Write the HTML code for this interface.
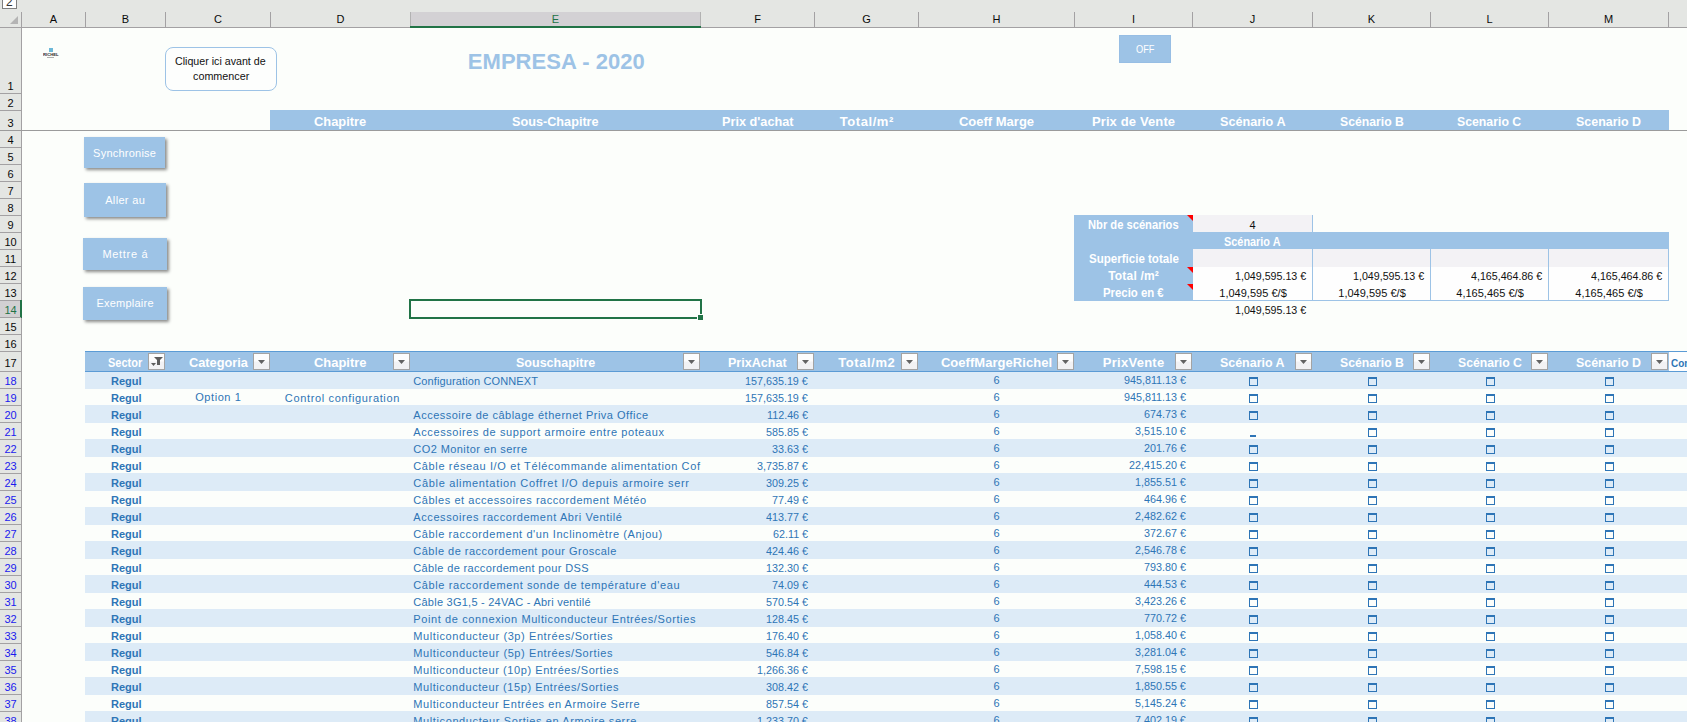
<!DOCTYPE html>
<html><head><meta charset="utf-8"><title>sheet</title>
<style>
html,body{margin:0;padding:0}
body{width:1687px;height:722px;overflow:hidden;background:#fcfefb;position:relative;font-family:"Liberation Sans",sans-serif}
#s{position:absolute;left:0;top:0;width:1687px;height:722px;overflow:hidden}
#s div,#s svg{position:absolute;box-sizing:content-box}
.t{white-space:pre;transform-origin:0 50%}
</style></head><body><div id="s">
<div style="left:0px;top:0px;width:1687px;height:28px;background:#e4e6e3;"></div>
<div style="left:0px;top:28px;width:22px;height:694px;background:#e4e6e3;"></div>
<div style="left:0px;top:27px;width:1687px;height:1px;background:#a3a1a3;"></div>
<div style="left:21px;top:12px;width:1px;height:710px;background:#a3a1a3;"></div>
<div style="left:2px;top:-8px;width:13px;height:15px;border:1px solid #7f7f7f;background:#fff"></div>
<div class="t" style="left:5.96px;top:-5.96px;font-size:12px;line-height:16px;color:#333;">2</div>
<svg style="left:10px;top:16px" width="9" height="9"><path d="M8 0 V8 H0 Z" fill="#b4b4b4"/></svg>
<div style="left:411px;top:12px;width:289px;height:14px;background:#d3d1d4;"></div>
<div style="left:85px;top:12px;width:1px;height:15px;background:#a3a1a3;"></div>
<div class="t" style="left:49.83px;top:12.39px;font-size:11px;line-height:14px;color:#0a0a0a;">A</div>
<div style="left:165px;top:12px;width:1px;height:15px;background:#a3a1a3;"></div>
<div class="t" style="left:121.83px;top:12.39px;font-size:11px;line-height:14px;color:#0a0a0a;">B</div>
<div style="left:270px;top:12px;width:1px;height:15px;background:#a3a1a3;"></div>
<div class="t" style="left:214.03px;top:12.39px;font-size:11px;line-height:14px;color:#0a0a0a;">C</div>
<div style="left:410px;top:12px;width:1px;height:15px;background:#b2b2b2;"></div>
<div class="t" style="left:336.53px;top:12.39px;font-size:11px;line-height:14px;color:#0a0a0a;">D</div>
<div style="left:700px;top:12px;width:1px;height:15px;background:#b2b2b2;"></div>
<div class="t" style="left:551.83px;top:12.39px;font-size:11px;line-height:14px;color:#217346;">E</div>
<div style="left:814px;top:12px;width:1px;height:15px;background:#a3a1a3;"></div>
<div class="t" style="left:754.14px;top:12.39px;font-size:11px;line-height:14px;color:#0a0a0a;">F</div>
<div style="left:918px;top:12px;width:1px;height:15px;background:#a3a1a3;"></div>
<div class="t" style="left:862.22px;top:12.39px;font-size:11px;line-height:14px;color:#0a0a0a;">G</div>
<div style="left:1074px;top:12px;width:1px;height:15px;background:#a3a1a3;"></div>
<div class="t" style="left:992.53px;top:12.39px;font-size:11px;line-height:14px;color:#0a0a0a;">H</div>
<div style="left:1192px;top:12px;width:1px;height:15px;background:#a3a1a3;"></div>
<div class="t" style="left:1131.97px;top:12.39px;font-size:11px;line-height:14px;color:#0a0a0a;">I</div>
<div style="left:1312px;top:12px;width:1px;height:15px;background:#a3a1a3;"></div>
<div class="t" style="left:1249.75px;top:12.39px;font-size:11px;line-height:14px;color:#0a0a0a;">J</div>
<div style="left:1430px;top:12px;width:1px;height:15px;background:#a3a1a3;"></div>
<div class="t" style="left:1367.83px;top:12.39px;font-size:11px;line-height:14px;color:#0a0a0a;">K</div>
<div style="left:1548px;top:12px;width:1px;height:15px;background:#a3a1a3;"></div>
<div class="t" style="left:1486.44px;top:12.39px;font-size:11px;line-height:14px;color:#0a0a0a;">L</div>
<div style="left:1668px;top:12px;width:1px;height:15px;background:#a3a1a3;"></div>
<div class="t" style="left:1603.92px;top:12.39px;font-size:11px;line-height:14px;color:#0a0a0a;">M</div>
<div style="left:410px;top:26px;width:291px;height:2px;background:#217346;"></div>
<div style="left:0px;top:93px;width:21px;height:1px;background:#a3a1a3;"></div>
<div class="t" style="left:7.44px;top:78.99px;font-size:11px;line-height:14px;color:#0a0a0a;">1</div>
<div style="left:0px;top:110px;width:21px;height:1px;background:#a3a1a3;"></div>
<div class="t" style="left:7.44px;top:95.99px;font-size:11px;line-height:14px;color:#0a0a0a;">2</div>
<div style="left:0px;top:130px;width:21px;height:1px;background:#a3a1a3;"></div>
<div class="t" style="left:7.44px;top:115.99px;font-size:11px;line-height:14px;color:#0a0a0a;">3</div>
<div style="left:0px;top:147px;width:21px;height:1px;background:#a3a1a3;"></div>
<div class="t" style="left:7.44px;top:132.99px;font-size:11px;line-height:14px;color:#0a0a0a;">4</div>
<div style="left:0px;top:164px;width:21px;height:1px;background:#a3a1a3;"></div>
<div class="t" style="left:7.44px;top:149.99px;font-size:11px;line-height:14px;color:#0a0a0a;">5</div>
<div style="left:0px;top:181px;width:21px;height:1px;background:#a3a1a3;"></div>
<div class="t" style="left:7.44px;top:166.99px;font-size:11px;line-height:14px;color:#0a0a0a;">6</div>
<div style="left:0px;top:198px;width:21px;height:1px;background:#a3a1a3;"></div>
<div class="t" style="left:7.44px;top:183.99px;font-size:11px;line-height:14px;color:#0a0a0a;">7</div>
<div style="left:0px;top:215px;width:21px;height:1px;background:#a3a1a3;"></div>
<div class="t" style="left:7.44px;top:200.99px;font-size:11px;line-height:14px;color:#0a0a0a;">8</div>
<div style="left:0px;top:232px;width:21px;height:1px;background:#a3a1a3;"></div>
<div class="t" style="left:7.44px;top:217.99px;font-size:11px;line-height:14px;color:#0a0a0a;">9</div>
<div style="left:0px;top:249px;width:21px;height:1px;background:#a3a1a3;"></div>
<div class="t" style="left:4.38px;top:234.99px;font-size:11px;line-height:14px;color:#0a0a0a;">10</div>
<div style="left:0px;top:266px;width:21px;height:1px;background:#a3a1a3;"></div>
<div class="t" style="left:4.79px;top:251.99px;font-size:11px;line-height:14px;color:#0a0a0a;">11</div>
<div style="left:0px;top:283px;width:21px;height:1px;background:#a3a1a3;"></div>
<div class="t" style="left:4.38px;top:268.99px;font-size:11px;line-height:14px;color:#0a0a0a;">12</div>
<div style="left:0px;top:300px;width:21px;height:1px;background:#a3a1a3;"></div>
<div class="t" style="left:4.38px;top:285.99px;font-size:11px;line-height:14px;color:#0a0a0a;">13</div>
<div style="left:0px;top:301px;width:21px;height:16px;background:#d2d0d2;"></div>
<div style="left:20px;top:300px;width:2px;height:18px;background:#217346;"></div>
<div style="left:0px;top:317px;width:21px;height:1px;background:#a3a1a3;"></div>
<div class="t" style="left:4.38px;top:302.99px;font-size:11px;line-height:14px;color:#217346;">14</div>
<div style="left:0px;top:334px;width:21px;height:1px;background:#a3a1a3;"></div>
<div class="t" style="left:4.38px;top:319.99px;font-size:11px;line-height:14px;color:#0a0a0a;">15</div>
<div style="left:0px;top:351px;width:21px;height:1px;background:#a3a1a3;"></div>
<div class="t" style="left:4.38px;top:336.99px;font-size:11px;line-height:14px;color:#0a0a0a;">16</div>
<div style="left:0px;top:371px;width:21px;height:1px;background:#a3a1a3;"></div>
<div class="t" style="left:4.38px;top:356.19px;font-size:11px;line-height:14px;color:#0a0a0a;">17</div>
<div style="left:0px;top:388px;width:21px;height:1px;background:#a3a1a3;"></div>
<div class="t" style="left:4.38px;top:373.99px;font-size:11px;line-height:14px;color:#1a1aee;">18</div>
<div style="left:0px;top:405px;width:21px;height:1px;background:#a3a1a3;"></div>
<div class="t" style="left:4.38px;top:390.99px;font-size:11px;line-height:14px;color:#1a1aee;">19</div>
<div style="left:0px;top:422px;width:21px;height:1px;background:#a3a1a3;"></div>
<div class="t" style="left:4.38px;top:407.99px;font-size:11px;line-height:14px;color:#1a1aee;">20</div>
<div style="left:0px;top:439px;width:21px;height:1px;background:#a3a1a3;"></div>
<div class="t" style="left:4.38px;top:424.99px;font-size:11px;line-height:14px;color:#1a1aee;">21</div>
<div style="left:0px;top:456px;width:21px;height:1px;background:#a3a1a3;"></div>
<div class="t" style="left:4.38px;top:441.99px;font-size:11px;line-height:14px;color:#1a1aee;">22</div>
<div style="left:0px;top:473px;width:21px;height:1px;background:#a3a1a3;"></div>
<div class="t" style="left:4.38px;top:458.99px;font-size:11px;line-height:14px;color:#1a1aee;">23</div>
<div style="left:0px;top:490px;width:21px;height:1px;background:#a3a1a3;"></div>
<div class="t" style="left:4.38px;top:475.99px;font-size:11px;line-height:14px;color:#1a1aee;">24</div>
<div style="left:0px;top:507px;width:21px;height:1px;background:#a3a1a3;"></div>
<div class="t" style="left:4.38px;top:492.99px;font-size:11px;line-height:14px;color:#1a1aee;">25</div>
<div style="left:0px;top:524px;width:21px;height:1px;background:#a3a1a3;"></div>
<div class="t" style="left:4.38px;top:509.99px;font-size:11px;line-height:14px;color:#1a1aee;">26</div>
<div style="left:0px;top:541px;width:21px;height:1px;background:#a3a1a3;"></div>
<div class="t" style="left:4.38px;top:526.99px;font-size:11px;line-height:14px;color:#1a1aee;">27</div>
<div style="left:0px;top:558px;width:21px;height:1px;background:#a3a1a3;"></div>
<div class="t" style="left:4.38px;top:543.99px;font-size:11px;line-height:14px;color:#1a1aee;">28</div>
<div style="left:0px;top:575px;width:21px;height:1px;background:#a3a1a3;"></div>
<div class="t" style="left:4.38px;top:560.99px;font-size:11px;line-height:14px;color:#1a1aee;">29</div>
<div style="left:0px;top:592px;width:21px;height:1px;background:#a3a1a3;"></div>
<div class="t" style="left:4.38px;top:577.99px;font-size:11px;line-height:14px;color:#1a1aee;">30</div>
<div style="left:0px;top:609px;width:21px;height:1px;background:#a3a1a3;"></div>
<div class="t" style="left:4.38px;top:594.99px;font-size:11px;line-height:14px;color:#1a1aee;">31</div>
<div style="left:0px;top:626px;width:21px;height:1px;background:#a3a1a3;"></div>
<div class="t" style="left:4.38px;top:611.99px;font-size:11px;line-height:14px;color:#1a1aee;">32</div>
<div style="left:0px;top:643px;width:21px;height:1px;background:#a3a1a3;"></div>
<div class="t" style="left:4.38px;top:628.99px;font-size:11px;line-height:14px;color:#1a1aee;">33</div>
<div style="left:0px;top:660px;width:21px;height:1px;background:#a3a1a3;"></div>
<div class="t" style="left:4.38px;top:645.99px;font-size:11px;line-height:14px;color:#1a1aee;">34</div>
<div style="left:0px;top:677px;width:21px;height:1px;background:#a3a1a3;"></div>
<div class="t" style="left:4.38px;top:662.99px;font-size:11px;line-height:14px;color:#1a1aee;">35</div>
<div style="left:0px;top:694px;width:21px;height:1px;background:#a3a1a3;"></div>
<div class="t" style="left:4.38px;top:679.99px;font-size:11px;line-height:14px;color:#1a1aee;">36</div>
<div style="left:0px;top:711px;width:21px;height:1px;background:#a3a1a3;"></div>
<div class="t" style="left:4.38px;top:696.99px;font-size:11px;line-height:14px;color:#1a1aee;">37</div>
<div style="left:0px;top:728px;width:21px;height:1px;background:#a3a1a3;"></div>
<div class="t" style="left:4.38px;top:713.99px;font-size:11px;line-height:14px;color:#1a1aee;">38</div>
<div style="left:0px;top:130px;width:1687px;height:1px;background:#9b9b9b;"></div>
<div style="left:49px;top:48px;width:4px;height:4px;background:#6cb8d8;"></div>
<div class="t" style="left:43.1px;top:52.6px;font-size:7px;line-height:8px;font-weight:bold;color:#2b2b2b;transform-origin:0 0;transform:scale(0.6,0.5)">RICHEL</div>
<div style="left:47px;top:57px;width:7px;height:1px;background:#b0b0b0;"></div>
<div style="left:165px;top:47px;width:110px;height:42px;border:1px solid #9dc3e6;border-radius:8px;background:#fdfefd"></div>
<div class="t" style="left:175.20px;top:54.19px;font-size:11px;line-height:14px;color:#111;transform:scaleX(0.9685);">Cliquer ici avant de</div>
<div class="t" style="left:192.65px;top:69.19px;font-size:11px;line-height:14px;color:#111;transform:scaleX(0.9798);">commencer</div>
<div class="t" style="left:467.80px;top:47.48px;font-size:22px;line-height:29px;color:#9dc3e6;font-weight:bold;letter-spacing:0.040px;">EMPRESA - 2020</div>
<div style="left:1119px;top:35px;width:50px;height:26px;border:1px solid #97bee4;background:#9dc3e6"></div>
<div class="t" style="left:1135.75px;top:42.09px;font-size:11px;line-height:14px;color:#fff;transform:scaleX(0.8411);">OFF</div>
<div style="left:270px;top:110px;width:1399px;height:20px;background:#9dc3e6;"></div>
<div class="t" style="left:314.40px;top:113.00px;font-size:13px;line-height:17px;color:#fff;font-weight:bold;transform:scaleX(0.9899);">Chapitre</div>
<div class="t" style="left:512.20px;top:113.00px;font-size:13px;line-height:17px;color:#fff;font-weight:bold;transform:scaleX(0.9747);">Sous-Chapitre</div>
<div class="t" style="left:721.75px;top:113.00px;font-size:13px;line-height:17px;color:#fff;font-weight:bold;transform:scaleX(0.9770);">Prix d&#x27;achat</div>
<div class="t" style="left:839.75px;top:113.00px;font-size:13px;line-height:17px;color:#fff;font-weight:bold;letter-spacing:0.559px;">Total/m²</div>
<div class="t" style="left:958.94px;top:113.00px;font-size:13px;line-height:17px;color:#fff;font-weight:bold;">Coeff Marge</div>
<div class="t" style="left:1091.90px;top:113.00px;font-size:13px;line-height:17px;color:#fff;font-weight:bold;letter-spacing:0.129px;">Prix de Vente</div>
<div class="t" style="left:1219.75px;top:113.00px;font-size:13px;line-height:17px;color:#fff;font-weight:bold;transform:scaleX(0.9713);">Scénario A</div>
<div class="t" style="left:1339.60px;top:113.00px;font-size:13px;line-height:17px;color:#fff;font-weight:bold;transform:scaleX(0.9394);">Scénario B</div>
<div class="t" style="left:1457.40px;top:113.00px;font-size:13px;line-height:17px;color:#fff;font-weight:bold;transform:scaleX(0.9453);">Scenario C</div>
<div class="t" style="left:1576.00px;top:113.00px;font-size:13px;line-height:17px;color:#fff;font-weight:bold;transform:scaleX(0.9571);">Scenario D</div>
<div style="left:84px;top:137px;width:81px;height:31px;background:#9dc3e6;box-shadow:2px 2px 3px rgba(0,0,0,.45)"></div>
<div class="t" style="left:93.10px;top:145.79px;font-size:11px;line-height:14px;color:#fff;letter-spacing:0.227px;">Synchronise</div>
<div style="left:84px;top:183px;width:82px;height:34px;background:#9dc3e6;box-shadow:2px 2px 3px rgba(0,0,0,.45)"></div>
<div class="t" style="left:105.20px;top:192.59px;font-size:11px;line-height:14px;color:#fff;letter-spacing:0.329px;">Aller au</div>
<div style="left:83px;top:238px;width:84px;height:32px;background:#9dc3e6;box-shadow:2px 2px 3px rgba(0,0,0,.45)"></div>
<div class="t" style="left:102.50px;top:246.89px;font-size:11px;line-height:14px;color:#fff;letter-spacing:0.664px;">Mettre á</div>
<div style="left:83px;top:287px;width:84px;height:33px;background:#9dc3e6;box-shadow:2px 2px 3px rgba(0,0,0,.45)"></div>
<div class="t" style="left:96.50px;top:296.09px;font-size:11px;line-height:14px;color:#fff;letter-spacing:0.220px;">Exemplaire</div>
<div style="left:1074px;top:215px;width:119px;height:86px;background:#9dc3e6;"></div>
<div style="left:1193px;top:215px;width:119px;height:17px;background:#f3f2f5;"></div>
<div style="left:1193px;top:232px;width:476px;height:17px;background:#9dc3e6;"></div>
<div style="left:1193px;top:249px;width:476px;height:18px;background:#f3f2f5;"></div>
<div style="left:1193px;top:267px;width:476px;height:33px;background:#fefefe;"></div>
<div style="left:1312px;top:249px;width:1px;height:52px;background:#9dc3e6;"></div>
<div style="left:1430px;top:249px;width:1px;height:52px;background:#9dc3e6;"></div>
<div style="left:1548px;top:249px;width:1px;height:52px;background:#9dc3e6;"></div>
<div style="left:1668px;top:249px;width:1px;height:52px;background:#9dc3e6;"></div>
<div style="left:1312px;top:215px;width:1px;height:17px;background:#9dc3e6;"></div>
<div style="left:1074px;top:300px;width:595px;height:1px;background:#9dc3e6;"></div>
<svg style="left:1187px;top:215px" width="6" height="6"><path d="M0 0 H6 V6 Z" fill="#f00"/></svg>
<svg style="left:1187px;top:267px" width="6" height="6"><path d="M0 0 H6 V6 Z" fill="#f00"/></svg>
<svg style="left:1187px;top:284px" width="6" height="6"><path d="M0 0 H6 V6 Z" fill="#f00"/></svg>
<div class="t" style="left:1088.20px;top:216.64px;font-size:12px;line-height:16px;color:#fff;font-weight:bold;transform:scaleX(0.9305);">Nbr de scénarios</div>
<div class="t" style="left:1088.60px;top:250.64px;font-size:12px;line-height:16px;color:#fff;font-weight:bold;transform:scaleX(0.9619);">Superficie totale</div>
<div class="t" style="left:1108.15px;top:267.64px;font-size:12px;line-height:16px;color:#fff;font-weight:bold;letter-spacing:0.199px;">Total /m²</div>
<div class="t" style="left:1103.15px;top:284.64px;font-size:12px;line-height:16px;color:#fff;font-weight:bold;transform:scaleX(0.9480);">Precio en €</div>
<div class="t" style="left:1249.44px;top:217.99px;font-size:11px;line-height:14px;color:#111;">4</div>
<div class="t" style="left:1224.25px;top:233.64px;font-size:12px;line-height:16px;color:#fff;font-weight:bold;transform:scaleX(0.9077);">Scénario A</div>
<div class="t" style="left:1234.80px;top:268.99px;font-size:11px;line-height:14px;color:#111;transform:scaleX(0.9700);">1,049,595.13 €</div>
<div class="t" style="left:1219.25px;top:285.99px;font-size:11px;line-height:14px;color:#111;letter-spacing:0.018px;">1,049,595 €/$</div>
<div class="t" style="left:1352.80px;top:268.99px;font-size:11px;line-height:14px;color:#111;transform:scaleX(0.9700);">1,049,595.13 €</div>
<div class="t" style="left:1338.25px;top:285.99px;font-size:11px;line-height:14px;color:#111;letter-spacing:0.018px;">1,049,595 €/$</div>
<div class="t" style="left:1470.80px;top:268.99px;font-size:11px;line-height:14px;color:#111;transform:scaleX(0.9700);">4,165,464.86 €</div>
<div class="t" style="left:1456.25px;top:285.99px;font-size:11px;line-height:14px;color:#111;letter-spacing:0.018px;">4,165,465 €/$</div>
<div class="t" style="left:1590.80px;top:268.99px;font-size:11px;line-height:14px;color:#111;transform:scaleX(0.9700);">4,165,464.86 €</div>
<div class="t" style="left:1575.25px;top:285.99px;font-size:11px;line-height:14px;color:#111;letter-spacing:0.018px;">4,165,465 €/$</div>
<div class="t" style="left:1234.80px;top:302.89px;font-size:11px;line-height:14px;color:#111;transform:scaleX(0.9700);">1,049,595.13 €</div>
<div style="left:409px;top:299px;width:289px;height:16px;border:2px solid #217346"></div>
<div style="left:697px;top:314px;width:7px;height:7px;background:#fcfefb;"></div>
<div style="left:698px;top:315px;width:5px;height:5px;background:#217346;"></div>
<div style="left:85px;top:351px;width:1602px;height:21px;background:#9dc3e6;"></div>
<div style="left:1669px;top:352px;width:18px;height:19px;background:#fefefe;"></div>
<div class="t" style="left:108.30px;top:353.80px;font-size:13px;line-height:17px;color:#fff;font-weight:bold;transform:scaleX(0.8452);">Sector</div>
<div style="left:148px;top:353px;width:15px;height:15px;border:1px solid #a3a3a3;background:linear-gradient(#fdfdfd 0,#fdfdfd 46%,#f2f2f4 54%,#f2f2f4 100%)"></div>
<svg style="left:148px;top:353px" width="17" height="17"><path d="M6 4 H15 L12 7 V12 H9 V7 Z" fill="#5c5c5c"/><path d="M3 10 H8 L5.5 13 Z" fill="#5c5c5c"/></svg>
<div class="t" style="left:188.60px;top:353.80px;font-size:13px;line-height:17px;color:#fff;font-weight:bold;transform:scaleX(0.9806);">Categoria</div>
<div style="left:253px;top:353px;width:15px;height:15px;border:1px solid #a3a3a3;background:linear-gradient(#fdfdfd 0,#fdfdfd 46%,#f2f2f4 54%,#f2f2f4 100%)"></div>
<svg style="left:253px;top:353px" width="17" height="17"><path d="M5 7 H12 L8.5 11 Z" fill="#636363"/></svg>
<div class="t" style="left:314.30px;top:353.80px;font-size:13px;line-height:17px;color:#fff;font-weight:bold;transform:scaleX(0.9937);">Chapitre</div>
<div style="left:393px;top:353px;width:15px;height:15px;border:1px solid #a3a3a3;background:linear-gradient(#fdfdfd 0,#fdfdfd 46%,#f2f2f4 54%,#f2f2f4 100%)"></div>
<svg style="left:393px;top:353px" width="17" height="17"><path d="M5 7 H12 L8.5 11 Z" fill="#636363"/></svg>
<div class="t" style="left:515.85px;top:353.80px;font-size:13px;line-height:17px;color:#fff;font-weight:bold;transform:scaleX(0.9629);">Souschapitre</div>
<div style="left:683px;top:353px;width:15px;height:15px;border:1px solid #a3a3a3;background:linear-gradient(#fdfdfd 0,#fdfdfd 46%,#f2f2f4 54%,#f2f2f4 100%)"></div>
<svg style="left:683px;top:353px" width="17" height="17"><path d="M5 7 H12 L8.5 11 Z" fill="#636363"/></svg>
<div class="t" style="left:728.20px;top:353.80px;font-size:13px;line-height:17px;color:#fff;font-weight:bold;transform:scaleX(0.9655);">PrixAchat</div>
<div style="left:797px;top:353px;width:15px;height:15px;border:1px solid #a3a3a3;background:linear-gradient(#fdfdfd 0,#fdfdfd 46%,#f2f2f4 54%,#f2f2f4 100%)"></div>
<svg style="left:797px;top:353px" width="17" height="17"><path d="M5 7 H12 L8.5 11 Z" fill="#636363"/></svg>
<div class="t" style="left:838.25px;top:353.80px;font-size:13px;line-height:17px;color:#fff;font-weight:bold;letter-spacing:0.573px;">Total/m2</div>
<div style="left:901px;top:353px;width:15px;height:15px;border:1px solid #a3a3a3;background:linear-gradient(#fdfdfd 0,#fdfdfd 46%,#f2f2f4 54%,#f2f2f4 100%)"></div>
<svg style="left:901px;top:353px" width="17" height="17"><path d="M5 7 H12 L8.5 11 Z" fill="#636363"/></svg>
<div class="t" style="left:940.90px;top:353.80px;font-size:13px;line-height:17px;color:#fff;font-weight:bold;letter-spacing:0.045px;">CoeffMargeRichel</div>
<div style="left:1057px;top:353px;width:15px;height:15px;border:1px solid #a3a3a3;background:linear-gradient(#fdfdfd 0,#fdfdfd 46%,#f2f2f4 54%,#f2f2f4 100%)"></div>
<svg style="left:1057px;top:353px" width="17" height="17"><path d="M5 7 H12 L8.5 11 Z" fill="#636363"/></svg>
<div class="t" style="left:1102.85px;top:353.80px;font-size:13px;line-height:17px;color:#fff;font-weight:bold;letter-spacing:0.255px;">PrixVente</div>
<div style="left:1175px;top:353px;width:15px;height:15px;border:1px solid #a3a3a3;background:linear-gradient(#fdfdfd 0,#fdfdfd 46%,#f2f2f4 54%,#f2f2f4 100%)"></div>
<svg style="left:1175px;top:353px" width="17" height="17"><path d="M5 7 H12 L8.5 11 Z" fill="#636363"/></svg>
<div class="t" style="left:1220.25px;top:353.80px;font-size:13px;line-height:17px;color:#fff;font-weight:bold;transform:scaleX(0.9565);">Scénario A</div>
<div style="left:1295px;top:353px;width:15px;height:15px;border:1px solid #a3a3a3;background:linear-gradient(#fdfdfd 0,#fdfdfd 46%,#f2f2f4 54%,#f2f2f4 100%)"></div>
<svg style="left:1295px;top:353px" width="17" height="17"><path d="M5 7 H12 L8.5 11 Z" fill="#636363"/></svg>
<div class="t" style="left:1339.60px;top:353.80px;font-size:13px;line-height:17px;color:#fff;font-weight:bold;transform:scaleX(0.9394);">Scénario B</div>
<div style="left:1413px;top:353px;width:15px;height:15px;border:1px solid #a3a3a3;background:linear-gradient(#fdfdfd 0,#fdfdfd 46%,#f2f2f4 54%,#f2f2f4 100%)"></div>
<svg style="left:1413px;top:353px" width="17" height="17"><path d="M5 7 H12 L8.5 11 Z" fill="#636363"/></svg>
<div class="t" style="left:1457.55px;top:353.80px;font-size:13px;line-height:17px;color:#fff;font-weight:bold;transform:scaleX(0.9409);">Scénario C</div>
<div style="left:1531px;top:353px;width:15px;height:15px;border:1px solid #a3a3a3;background:linear-gradient(#fdfdfd 0,#fdfdfd 46%,#f2f2f4 54%,#f2f2f4 100%)"></div>
<svg style="left:1531px;top:353px" width="17" height="17"><path d="M5 7 H12 L8.5 11 Z" fill="#636363"/></svg>
<div class="t" style="left:1576.05px;top:353.80px;font-size:13px;line-height:17px;color:#fff;font-weight:bold;transform:scaleX(0.9556);">Scénario D</div>
<div style="left:1651px;top:353px;width:15px;height:15px;border:1px solid #a3a3a3;background:linear-gradient(#fdfdfd 0,#fdfdfd 46%,#f2f2f4 54%,#f2f2f4 100%)"></div>
<svg style="left:1651px;top:353px" width="17" height="17"><path d="M5 7 H12 L8.5 11 Z" fill="#636363"/></svg>
<div class="t" style="left:1671.40px;top:355.99px;font-size:11px;line-height:14px;color:#2e75b6;font-weight:bold;transform:scaleX(0.9027);">Con</div>
<div style="left:85px;top:371px;width:1602px;height:18px;background:#ddebf7;"></div>
<div class="t" style="left:111.02px;top:373.99px;font-size:11px;line-height:14px;color:#2e75b6;font-weight:bold;">Regul</div>
<div class="t" style="left:413.30px;top:373.69px;font-size:11px;line-height:14px;color:#2e75b6;letter-spacing:0.122px;">Configuration CONNEXT</div>
<div class="t" style="left:745.39px;top:373.69px;font-size:11px;line-height:14px;color:#2e75b6;transform:scaleX(0.9780);">157,635.19 €</div>
<div class="t" style="left:993.44px;top:373.19px;font-size:11px;line-height:14px;color:#2e75b6;">6</div>
<div class="t" style="left:1124.19px;top:373.19px;font-size:11px;line-height:14px;color:#2e75b6;transform:scaleX(0.9780);">945,811.13 €</div>
<div style="left:1249px;top:377px;width:7px;height:6px;border:1px solid #2e75b6;border-top-width:2px"></div>
<div style="left:1368px;top:377px;width:7px;height:6px;border:1px solid #2e75b6;border-top-width:2px"></div>
<div style="left:1486px;top:377px;width:7px;height:6px;border:1px solid #2e75b6;border-top-width:2px"></div>
<div style="left:1605px;top:377px;width:7px;height:6px;border:1px solid #2e75b6;border-top-width:2px"></div>
<div class="t" style="left:111.02px;top:390.99px;font-size:11px;line-height:14px;color:#2e75b6;font-weight:bold;">Regul</div>
<div class="t" style="left:195.25px;top:389.89px;font-size:11px;line-height:14px;color:#2e75b6;letter-spacing:0.560px;">Option 1</div>
<div class="t" style="left:284.85px;top:390.69px;font-size:11px;line-height:14px;color:#2e75b6;letter-spacing:0.650px;">Control configuration</div>
<div class="t" style="left:745.39px;top:390.69px;font-size:11px;line-height:14px;color:#2e75b6;transform:scaleX(0.9780);">157,635.19 €</div>
<div class="t" style="left:993.44px;top:390.19px;font-size:11px;line-height:14px;color:#2e75b6;">6</div>
<div class="t" style="left:1124.19px;top:390.19px;font-size:11px;line-height:14px;color:#2e75b6;transform:scaleX(0.9780);">945,811.13 €</div>
<div style="left:1249px;top:394px;width:7px;height:6px;border:1px solid #2e75b6;border-top-width:2px"></div>
<div style="left:1368px;top:394px;width:7px;height:6px;border:1px solid #2e75b6;border-top-width:2px"></div>
<div style="left:1486px;top:394px;width:7px;height:6px;border:1px solid #2e75b6;border-top-width:2px"></div>
<div style="left:1605px;top:394px;width:7px;height:6px;border:1px solid #2e75b6;border-top-width:2px"></div>
<div style="left:85px;top:405px;width:1602px;height:18px;background:#ddebf7;"></div>
<div class="t" style="left:111.02px;top:407.99px;font-size:11px;line-height:14px;color:#2e75b6;font-weight:bold;">Regul</div>
<div class="t" style="left:413.30px;top:407.69px;font-size:11px;line-height:14px;color:#2e75b6;letter-spacing:0.498px;">Accessoire de câblage éthernet Priva Office</div>
<div class="t" style="left:767.12px;top:407.69px;font-size:11px;line-height:14px;color:#2e75b6;transform:scaleX(0.9780);">112.46 €</div>
<div class="t" style="left:993.44px;top:407.19px;font-size:11px;line-height:14px;color:#2e75b6;">6</div>
<div class="t" style="left:1144.33px;top:407.19px;font-size:11px;line-height:14px;color:#2e75b6;transform:scaleX(0.9780);">674.73 €</div>
<div style="left:1249px;top:411px;width:7px;height:6px;border:1px solid #2e75b6;border-top-width:2px"></div>
<div style="left:1368px;top:411px;width:7px;height:6px;border:1px solid #2e75b6;border-top-width:2px"></div>
<div style="left:1486px;top:411px;width:7px;height:6px;border:1px solid #2e75b6;border-top-width:2px"></div>
<div style="left:1605px;top:411px;width:7px;height:6px;border:1px solid #2e75b6;border-top-width:2px"></div>
<div class="t" style="left:111.02px;top:424.99px;font-size:11px;line-height:14px;color:#2e75b6;font-weight:bold;">Regul</div>
<div class="t" style="left:413.30px;top:424.69px;font-size:11px;line-height:14px;color:#2e75b6;letter-spacing:0.598px;">Accessoires de support armoire entre poteaux</div>
<div class="t" style="left:766.33px;top:424.69px;font-size:11px;line-height:14px;color:#2e75b6;transform:scaleX(0.9780);">585.85 €</div>
<div class="t" style="left:993.44px;top:424.19px;font-size:11px;line-height:14px;color:#2e75b6;">6</div>
<div class="t" style="left:1135.35px;top:424.19px;font-size:11px;line-height:14px;color:#2e75b6;transform:scaleX(0.9780);">3,515.10 €</div>
<div style="left:1250px;top:435px;width:6px;height:2px;background:#2e75b6;"></div>
<div style="left:1368px;top:428px;width:7px;height:6px;border:1px solid #2e75b6;border-top-width:2px"></div>
<div style="left:1486px;top:428px;width:7px;height:6px;border:1px solid #2e75b6;border-top-width:2px"></div>
<div style="left:1605px;top:428px;width:7px;height:6px;border:1px solid #2e75b6;border-top-width:2px"></div>
<div style="left:85px;top:439px;width:1602px;height:18px;background:#ddebf7;"></div>
<div class="t" style="left:111.02px;top:441.99px;font-size:11px;line-height:14px;color:#2e75b6;font-weight:bold;">Regul</div>
<div class="t" style="left:413.30px;top:441.69px;font-size:11px;line-height:14px;color:#2e75b6;letter-spacing:0.418px;">CO2 Monitor en serre</div>
<div class="t" style="left:772.31px;top:441.69px;font-size:11px;line-height:14px;color:#2e75b6;transform:scaleX(0.9780);">33.63 €</div>
<div class="t" style="left:993.44px;top:441.19px;font-size:11px;line-height:14px;color:#2e75b6;">6</div>
<div class="t" style="left:1144.33px;top:441.19px;font-size:11px;line-height:14px;color:#2e75b6;transform:scaleX(0.9780);">201.76 €</div>
<div style="left:1249px;top:445px;width:7px;height:6px;border:1px solid #2e75b6;border-top-width:2px"></div>
<div style="left:1368px;top:445px;width:7px;height:6px;border:1px solid #2e75b6;border-top-width:2px"></div>
<div style="left:1486px;top:445px;width:7px;height:6px;border:1px solid #2e75b6;border-top-width:2px"></div>
<div style="left:1605px;top:445px;width:7px;height:6px;border:1px solid #2e75b6;border-top-width:2px"></div>
<div class="t" style="left:111.02px;top:458.99px;font-size:11px;line-height:14px;color:#2e75b6;font-weight:bold;">Regul</div>
<div class="t" style="left:413.30px;top:458.69px;font-size:11px;line-height:14px;color:#2e75b6;letter-spacing:0.627px;">Câble réseau I/O et Télécommande alimentation Cof</div>
<div class="t" style="left:757.35px;top:458.69px;font-size:11px;line-height:14px;color:#2e75b6;transform:scaleX(0.9780);">3,735.87 €</div>
<div class="t" style="left:993.44px;top:458.19px;font-size:11px;line-height:14px;color:#2e75b6;">6</div>
<div class="t" style="left:1129.37px;top:458.19px;font-size:11px;line-height:14px;color:#2e75b6;transform:scaleX(0.9780);">22,415.20 €</div>
<div style="left:1249px;top:462px;width:7px;height:6px;border:1px solid #2e75b6;border-top-width:2px"></div>
<div style="left:1368px;top:462px;width:7px;height:6px;border:1px solid #2e75b6;border-top-width:2px"></div>
<div style="left:1486px;top:462px;width:7px;height:6px;border:1px solid #2e75b6;border-top-width:2px"></div>
<div style="left:1605px;top:462px;width:7px;height:6px;border:1px solid #2e75b6;border-top-width:2px"></div>
<div style="left:85px;top:473px;width:1602px;height:18px;background:#ddebf7;"></div>
<div class="t" style="left:111.02px;top:475.99px;font-size:11px;line-height:14px;color:#2e75b6;font-weight:bold;">Regul</div>
<div class="t" style="left:413.30px;top:475.69px;font-size:11px;line-height:14px;color:#2e75b6;letter-spacing:0.677px;">Câble alimentation Coffret I/O depuis armoire serr</div>
<div class="t" style="left:766.33px;top:475.69px;font-size:11px;line-height:14px;color:#2e75b6;transform:scaleX(0.9780);">309.25 €</div>
<div class="t" style="left:993.44px;top:475.19px;font-size:11px;line-height:14px;color:#2e75b6;">6</div>
<div class="t" style="left:1135.35px;top:475.19px;font-size:11px;line-height:14px;color:#2e75b6;transform:scaleX(0.9780);">1,855.51 €</div>
<div style="left:1249px;top:479px;width:7px;height:6px;border:1px solid #2e75b6;border-top-width:2px"></div>
<div style="left:1368px;top:479px;width:7px;height:6px;border:1px solid #2e75b6;border-top-width:2px"></div>
<div style="left:1486px;top:479px;width:7px;height:6px;border:1px solid #2e75b6;border-top-width:2px"></div>
<div style="left:1605px;top:479px;width:7px;height:6px;border:1px solid #2e75b6;border-top-width:2px"></div>
<div class="t" style="left:111.02px;top:492.99px;font-size:11px;line-height:14px;color:#2e75b6;font-weight:bold;">Regul</div>
<div class="t" style="left:413.30px;top:492.69px;font-size:11px;line-height:14px;color:#2e75b6;letter-spacing:0.543px;">Câbles et accessoires raccordement Météo</div>
<div class="t" style="left:772.31px;top:492.69px;font-size:11px;line-height:14px;color:#2e75b6;transform:scaleX(0.9780);">77.49 €</div>
<div class="t" style="left:993.44px;top:492.19px;font-size:11px;line-height:14px;color:#2e75b6;">6</div>
<div class="t" style="left:1144.33px;top:492.19px;font-size:11px;line-height:14px;color:#2e75b6;transform:scaleX(0.9780);">464.96 €</div>
<div style="left:1249px;top:496px;width:7px;height:6px;border:1px solid #2e75b6;border-top-width:2px"></div>
<div style="left:1368px;top:496px;width:7px;height:6px;border:1px solid #2e75b6;border-top-width:2px"></div>
<div style="left:1486px;top:496px;width:7px;height:6px;border:1px solid #2e75b6;border-top-width:2px"></div>
<div style="left:1605px;top:496px;width:7px;height:6px;border:1px solid #2e75b6;border-top-width:2px"></div>
<div style="left:85px;top:507px;width:1602px;height:18px;background:#ddebf7;"></div>
<div class="t" style="left:111.02px;top:509.99px;font-size:11px;line-height:14px;color:#2e75b6;font-weight:bold;">Regul</div>
<div class="t" style="left:413.30px;top:509.69px;font-size:11px;line-height:14px;color:#2e75b6;letter-spacing:0.583px;">Accessoires raccordement Abri Ventilé</div>
<div class="t" style="left:766.33px;top:509.69px;font-size:11px;line-height:14px;color:#2e75b6;transform:scaleX(0.9780);">413.77 €</div>
<div class="t" style="left:993.44px;top:509.19px;font-size:11px;line-height:14px;color:#2e75b6;">6</div>
<div class="t" style="left:1135.35px;top:509.19px;font-size:11px;line-height:14px;color:#2e75b6;transform:scaleX(0.9780);">2,482.62 €</div>
<div style="left:1249px;top:513px;width:7px;height:6px;border:1px solid #2e75b6;border-top-width:2px"></div>
<div style="left:1368px;top:513px;width:7px;height:6px;border:1px solid #2e75b6;border-top-width:2px"></div>
<div style="left:1486px;top:513px;width:7px;height:6px;border:1px solid #2e75b6;border-top-width:2px"></div>
<div style="left:1605px;top:513px;width:7px;height:6px;border:1px solid #2e75b6;border-top-width:2px"></div>
<div class="t" style="left:111.02px;top:526.99px;font-size:11px;line-height:14px;color:#2e75b6;font-weight:bold;">Regul</div>
<div class="t" style="left:413.30px;top:526.69px;font-size:11px;line-height:14px;color:#2e75b6;letter-spacing:0.578px;">Câble raccordement d&#x27;un Inclinomètre (Anjou)</div>
<div class="t" style="left:773.11px;top:526.69px;font-size:11px;line-height:14px;color:#2e75b6;transform:scaleX(0.9780);">62.11 €</div>
<div class="t" style="left:993.44px;top:526.19px;font-size:11px;line-height:14px;color:#2e75b6;">6</div>
<div class="t" style="left:1144.33px;top:526.19px;font-size:11px;line-height:14px;color:#2e75b6;transform:scaleX(0.9780);">372.67 €</div>
<div style="left:1249px;top:530px;width:7px;height:6px;border:1px solid #2e75b6;border-top-width:2px"></div>
<div style="left:1368px;top:530px;width:7px;height:6px;border:1px solid #2e75b6;border-top-width:2px"></div>
<div style="left:1486px;top:530px;width:7px;height:6px;border:1px solid #2e75b6;border-top-width:2px"></div>
<div style="left:1605px;top:530px;width:7px;height:6px;border:1px solid #2e75b6;border-top-width:2px"></div>
<div style="left:85px;top:541px;width:1602px;height:18px;background:#ddebf7;"></div>
<div class="t" style="left:111.02px;top:543.99px;font-size:11px;line-height:14px;color:#2e75b6;font-weight:bold;">Regul</div>
<div class="t" style="left:413.30px;top:543.69px;font-size:11px;line-height:14px;color:#2e75b6;letter-spacing:0.489px;">Câble de raccordement pour Groscale</div>
<div class="t" style="left:766.33px;top:543.69px;font-size:11px;line-height:14px;color:#2e75b6;transform:scaleX(0.9780);">424.46 €</div>
<div class="t" style="left:993.44px;top:543.19px;font-size:11px;line-height:14px;color:#2e75b6;">6</div>
<div class="t" style="left:1135.35px;top:543.19px;font-size:11px;line-height:14px;color:#2e75b6;transform:scaleX(0.9780);">2,546.78 €</div>
<div style="left:1249px;top:547px;width:7px;height:6px;border:1px solid #2e75b6;border-top-width:2px"></div>
<div style="left:1368px;top:547px;width:7px;height:6px;border:1px solid #2e75b6;border-top-width:2px"></div>
<div style="left:1486px;top:547px;width:7px;height:6px;border:1px solid #2e75b6;border-top-width:2px"></div>
<div style="left:1605px;top:547px;width:7px;height:6px;border:1px solid #2e75b6;border-top-width:2px"></div>
<div class="t" style="left:111.02px;top:560.99px;font-size:11px;line-height:14px;color:#2e75b6;font-weight:bold;">Regul</div>
<div class="t" style="left:413.30px;top:560.69px;font-size:11px;line-height:14px;color:#2e75b6;letter-spacing:0.349px;">Câble de raccordement pour DSS</div>
<div class="t" style="left:766.33px;top:560.69px;font-size:11px;line-height:14px;color:#2e75b6;transform:scaleX(0.9780);">132.30 €</div>
<div class="t" style="left:993.44px;top:560.19px;font-size:11px;line-height:14px;color:#2e75b6;">6</div>
<div class="t" style="left:1144.33px;top:560.19px;font-size:11px;line-height:14px;color:#2e75b6;transform:scaleX(0.9780);">793.80 €</div>
<div style="left:1249px;top:564px;width:7px;height:6px;border:1px solid #2e75b6;border-top-width:2px"></div>
<div style="left:1368px;top:564px;width:7px;height:6px;border:1px solid #2e75b6;border-top-width:2px"></div>
<div style="left:1486px;top:564px;width:7px;height:6px;border:1px solid #2e75b6;border-top-width:2px"></div>
<div style="left:1605px;top:564px;width:7px;height:6px;border:1px solid #2e75b6;border-top-width:2px"></div>
<div style="left:85px;top:575px;width:1602px;height:18px;background:#ddebf7;"></div>
<div class="t" style="left:111.02px;top:577.99px;font-size:11px;line-height:14px;color:#2e75b6;font-weight:bold;">Regul</div>
<div class="t" style="left:413.30px;top:577.69px;font-size:11px;line-height:14px;color:#2e75b6;letter-spacing:0.610px;">Câble raccordement sonde de température d&#x27;eau</div>
<div class="t" style="left:772.31px;top:577.69px;font-size:11px;line-height:14px;color:#2e75b6;transform:scaleX(0.9780);">74.09 €</div>
<div class="t" style="left:993.44px;top:577.19px;font-size:11px;line-height:14px;color:#2e75b6;">6</div>
<div class="t" style="left:1144.33px;top:577.19px;font-size:11px;line-height:14px;color:#2e75b6;transform:scaleX(0.9780);">444.53 €</div>
<div style="left:1249px;top:581px;width:7px;height:6px;border:1px solid #2e75b6;border-top-width:2px"></div>
<div style="left:1368px;top:581px;width:7px;height:6px;border:1px solid #2e75b6;border-top-width:2px"></div>
<div style="left:1486px;top:581px;width:7px;height:6px;border:1px solid #2e75b6;border-top-width:2px"></div>
<div style="left:1605px;top:581px;width:7px;height:6px;border:1px solid #2e75b6;border-top-width:2px"></div>
<div class="t" style="left:111.02px;top:594.99px;font-size:11px;line-height:14px;color:#2e75b6;font-weight:bold;">Regul</div>
<div class="t" style="left:413.30px;top:594.69px;font-size:11px;line-height:14px;color:#2e75b6;letter-spacing:0.244px;">Câble 3G1,5 - 24VAC - Abri ventilé</div>
<div class="t" style="left:766.33px;top:594.69px;font-size:11px;line-height:14px;color:#2e75b6;transform:scaleX(0.9780);">570.54 €</div>
<div class="t" style="left:993.44px;top:594.19px;font-size:11px;line-height:14px;color:#2e75b6;">6</div>
<div class="t" style="left:1135.35px;top:594.19px;font-size:11px;line-height:14px;color:#2e75b6;transform:scaleX(0.9780);">3,423.26 €</div>
<div style="left:1249px;top:598px;width:7px;height:6px;border:1px solid #2e75b6;border-top-width:2px"></div>
<div style="left:1368px;top:598px;width:7px;height:6px;border:1px solid #2e75b6;border-top-width:2px"></div>
<div style="left:1486px;top:598px;width:7px;height:6px;border:1px solid #2e75b6;border-top-width:2px"></div>
<div style="left:1605px;top:598px;width:7px;height:6px;border:1px solid #2e75b6;border-top-width:2px"></div>
<div style="left:85px;top:609px;width:1602px;height:18px;background:#ddebf7;"></div>
<div class="t" style="left:111.02px;top:611.99px;font-size:11px;line-height:14px;color:#2e75b6;font-weight:bold;">Regul</div>
<div class="t" style="left:413.30px;top:611.69px;font-size:11px;line-height:14px;color:#2e75b6;letter-spacing:0.603px;">Point de connexion Multiconducteur Entrées/Sorties</div>
<div class="t" style="left:766.33px;top:611.69px;font-size:11px;line-height:14px;color:#2e75b6;transform:scaleX(0.9780);">128.45 €</div>
<div class="t" style="left:993.44px;top:611.19px;font-size:11px;line-height:14px;color:#2e75b6;">6</div>
<div class="t" style="left:1144.33px;top:611.19px;font-size:11px;line-height:14px;color:#2e75b6;transform:scaleX(0.9780);">770.72 €</div>
<div style="left:1249px;top:615px;width:7px;height:6px;border:1px solid #2e75b6;border-top-width:2px"></div>
<div style="left:1368px;top:615px;width:7px;height:6px;border:1px solid #2e75b6;border-top-width:2px"></div>
<div style="left:1486px;top:615px;width:7px;height:6px;border:1px solid #2e75b6;border-top-width:2px"></div>
<div style="left:1605px;top:615px;width:7px;height:6px;border:1px solid #2e75b6;border-top-width:2px"></div>
<div class="t" style="left:111.02px;top:628.99px;font-size:11px;line-height:14px;color:#2e75b6;font-weight:bold;">Regul</div>
<div class="t" style="left:413.30px;top:628.69px;font-size:11px;line-height:14px;color:#2e75b6;letter-spacing:0.588px;">Multiconducteur (3p) Entrées/Sorties</div>
<div class="t" style="left:766.33px;top:628.69px;font-size:11px;line-height:14px;color:#2e75b6;transform:scaleX(0.9780);">176.40 €</div>
<div class="t" style="left:993.44px;top:628.19px;font-size:11px;line-height:14px;color:#2e75b6;">6</div>
<div class="t" style="left:1135.35px;top:628.19px;font-size:11px;line-height:14px;color:#2e75b6;transform:scaleX(0.9780);">1,058.40 €</div>
<div style="left:1249px;top:632px;width:7px;height:6px;border:1px solid #2e75b6;border-top-width:2px"></div>
<div style="left:1368px;top:632px;width:7px;height:6px;border:1px solid #2e75b6;border-top-width:2px"></div>
<div style="left:1486px;top:632px;width:7px;height:6px;border:1px solid #2e75b6;border-top-width:2px"></div>
<div style="left:1605px;top:632px;width:7px;height:6px;border:1px solid #2e75b6;border-top-width:2px"></div>
<div style="left:85px;top:643px;width:1602px;height:18px;background:#ddebf7;"></div>
<div class="t" style="left:111.02px;top:645.99px;font-size:11px;line-height:14px;color:#2e75b6;font-weight:bold;">Regul</div>
<div class="t" style="left:413.30px;top:645.69px;font-size:11px;line-height:14px;color:#2e75b6;letter-spacing:0.588px;">Multiconducteur (5p) Entrées/Sorties</div>
<div class="t" style="left:766.33px;top:645.69px;font-size:11px;line-height:14px;color:#2e75b6;transform:scaleX(0.9780);">546.84 €</div>
<div class="t" style="left:993.44px;top:645.19px;font-size:11px;line-height:14px;color:#2e75b6;">6</div>
<div class="t" style="left:1135.35px;top:645.19px;font-size:11px;line-height:14px;color:#2e75b6;transform:scaleX(0.9780);">3,281.04 €</div>
<div style="left:1249px;top:649px;width:7px;height:6px;border:1px solid #2e75b6;border-top-width:2px"></div>
<div style="left:1368px;top:649px;width:7px;height:6px;border:1px solid #2e75b6;border-top-width:2px"></div>
<div style="left:1486px;top:649px;width:7px;height:6px;border:1px solid #2e75b6;border-top-width:2px"></div>
<div style="left:1605px;top:649px;width:7px;height:6px;border:1px solid #2e75b6;border-top-width:2px"></div>
<div class="t" style="left:111.02px;top:662.99px;font-size:11px;line-height:14px;color:#2e75b6;font-weight:bold;">Regul</div>
<div class="t" style="left:413.30px;top:662.69px;font-size:11px;line-height:14px;color:#2e75b6;letter-spacing:0.568px;">Multiconducteur (10p) Entrées/Sorties</div>
<div class="t" style="left:757.35px;top:662.69px;font-size:11px;line-height:14px;color:#2e75b6;transform:scaleX(0.9780);">1,266.36 €</div>
<div class="t" style="left:993.44px;top:662.19px;font-size:11px;line-height:14px;color:#2e75b6;">6</div>
<div class="t" style="left:1135.35px;top:662.19px;font-size:11px;line-height:14px;color:#2e75b6;transform:scaleX(0.9780);">7,598.15 €</div>
<div style="left:1249px;top:666px;width:7px;height:6px;border:1px solid #2e75b6;border-top-width:2px"></div>
<div style="left:1368px;top:666px;width:7px;height:6px;border:1px solid #2e75b6;border-top-width:2px"></div>
<div style="left:1486px;top:666px;width:7px;height:6px;border:1px solid #2e75b6;border-top-width:2px"></div>
<div style="left:1605px;top:666px;width:7px;height:6px;border:1px solid #2e75b6;border-top-width:2px"></div>
<div style="left:85px;top:677px;width:1602px;height:18px;background:#ddebf7;"></div>
<div class="t" style="left:111.02px;top:679.99px;font-size:11px;line-height:14px;color:#2e75b6;font-weight:bold;">Regul</div>
<div class="t" style="left:413.30px;top:679.69px;font-size:11px;line-height:14px;color:#2e75b6;letter-spacing:0.568px;">Multiconducteur (15p) Entrées/Sorties</div>
<div class="t" style="left:766.33px;top:679.69px;font-size:11px;line-height:14px;color:#2e75b6;transform:scaleX(0.9780);">308.42 €</div>
<div class="t" style="left:993.44px;top:679.19px;font-size:11px;line-height:14px;color:#2e75b6;">6</div>
<div class="t" style="left:1135.35px;top:679.19px;font-size:11px;line-height:14px;color:#2e75b6;transform:scaleX(0.9780);">1,850.55 €</div>
<div style="left:1249px;top:683px;width:7px;height:6px;border:1px solid #2e75b6;border-top-width:2px"></div>
<div style="left:1368px;top:683px;width:7px;height:6px;border:1px solid #2e75b6;border-top-width:2px"></div>
<div style="left:1486px;top:683px;width:7px;height:6px;border:1px solid #2e75b6;border-top-width:2px"></div>
<div style="left:1605px;top:683px;width:7px;height:6px;border:1px solid #2e75b6;border-top-width:2px"></div>
<div class="t" style="left:111.02px;top:696.99px;font-size:11px;line-height:14px;color:#2e75b6;font-weight:bold;">Regul</div>
<div class="t" style="left:413.30px;top:696.69px;font-size:11px;line-height:14px;color:#2e75b6;letter-spacing:0.553px;">Multiconducteur Entrées en Armoire Serre</div>
<div class="t" style="left:766.33px;top:696.69px;font-size:11px;line-height:14px;color:#2e75b6;transform:scaleX(0.9780);">857.54 €</div>
<div class="t" style="left:993.44px;top:696.19px;font-size:11px;line-height:14px;color:#2e75b6;">6</div>
<div class="t" style="left:1135.35px;top:696.19px;font-size:11px;line-height:14px;color:#2e75b6;transform:scaleX(0.9780);">5,145.24 €</div>
<div style="left:1249px;top:700px;width:7px;height:6px;border:1px solid #2e75b6;border-top-width:2px"></div>
<div style="left:1368px;top:700px;width:7px;height:6px;border:1px solid #2e75b6;border-top-width:2px"></div>
<div style="left:1486px;top:700px;width:7px;height:6px;border:1px solid #2e75b6;border-top-width:2px"></div>
<div style="left:1605px;top:700px;width:7px;height:6px;border:1px solid #2e75b6;border-top-width:2px"></div>
<div style="left:85px;top:711px;width:1602px;height:18px;background:#ddebf7;"></div>
<div class="t" style="left:111.02px;top:713.99px;font-size:11px;line-height:14px;color:#2e75b6;font-weight:bold;">Regul</div>
<div class="t" style="left:413.30px;top:713.69px;font-size:11px;line-height:14px;color:#2e75b6;letter-spacing:0.607px;">Multiconducteur Sorties en Armoire serre</div>
<div class="t" style="left:757.35px;top:713.69px;font-size:11px;line-height:14px;color:#2e75b6;transform:scaleX(0.9780);">1,233.70 €</div>
<div class="t" style="left:993.44px;top:713.19px;font-size:11px;line-height:14px;color:#2e75b6;">6</div>
<div class="t" style="left:1135.35px;top:713.19px;font-size:11px;line-height:14px;color:#2e75b6;transform:scaleX(0.9780);">7,402.19 €</div>
<div style="left:1249px;top:717px;width:7px;height:6px;border:1px solid #2e75b6;border-top-width:2px"></div>
<div style="left:1368px;top:717px;width:7px;height:6px;border:1px solid #2e75b6;border-top-width:2px"></div>
<div style="left:1486px;top:717px;width:7px;height:6px;border:1px solid #2e75b6;border-top-width:2px"></div>
<div style="left:1605px;top:717px;width:7px;height:6px;border:1px solid #2e75b6;border-top-width:2px"></div>
<div style="left:85px;top:351px;width:1602px;height:1px;background:#5b9bd5;"></div>
<div style="left:85px;top:371px;width:1602px;height:1px;background:#5b9bd5;"></div>
</div></body></html>
